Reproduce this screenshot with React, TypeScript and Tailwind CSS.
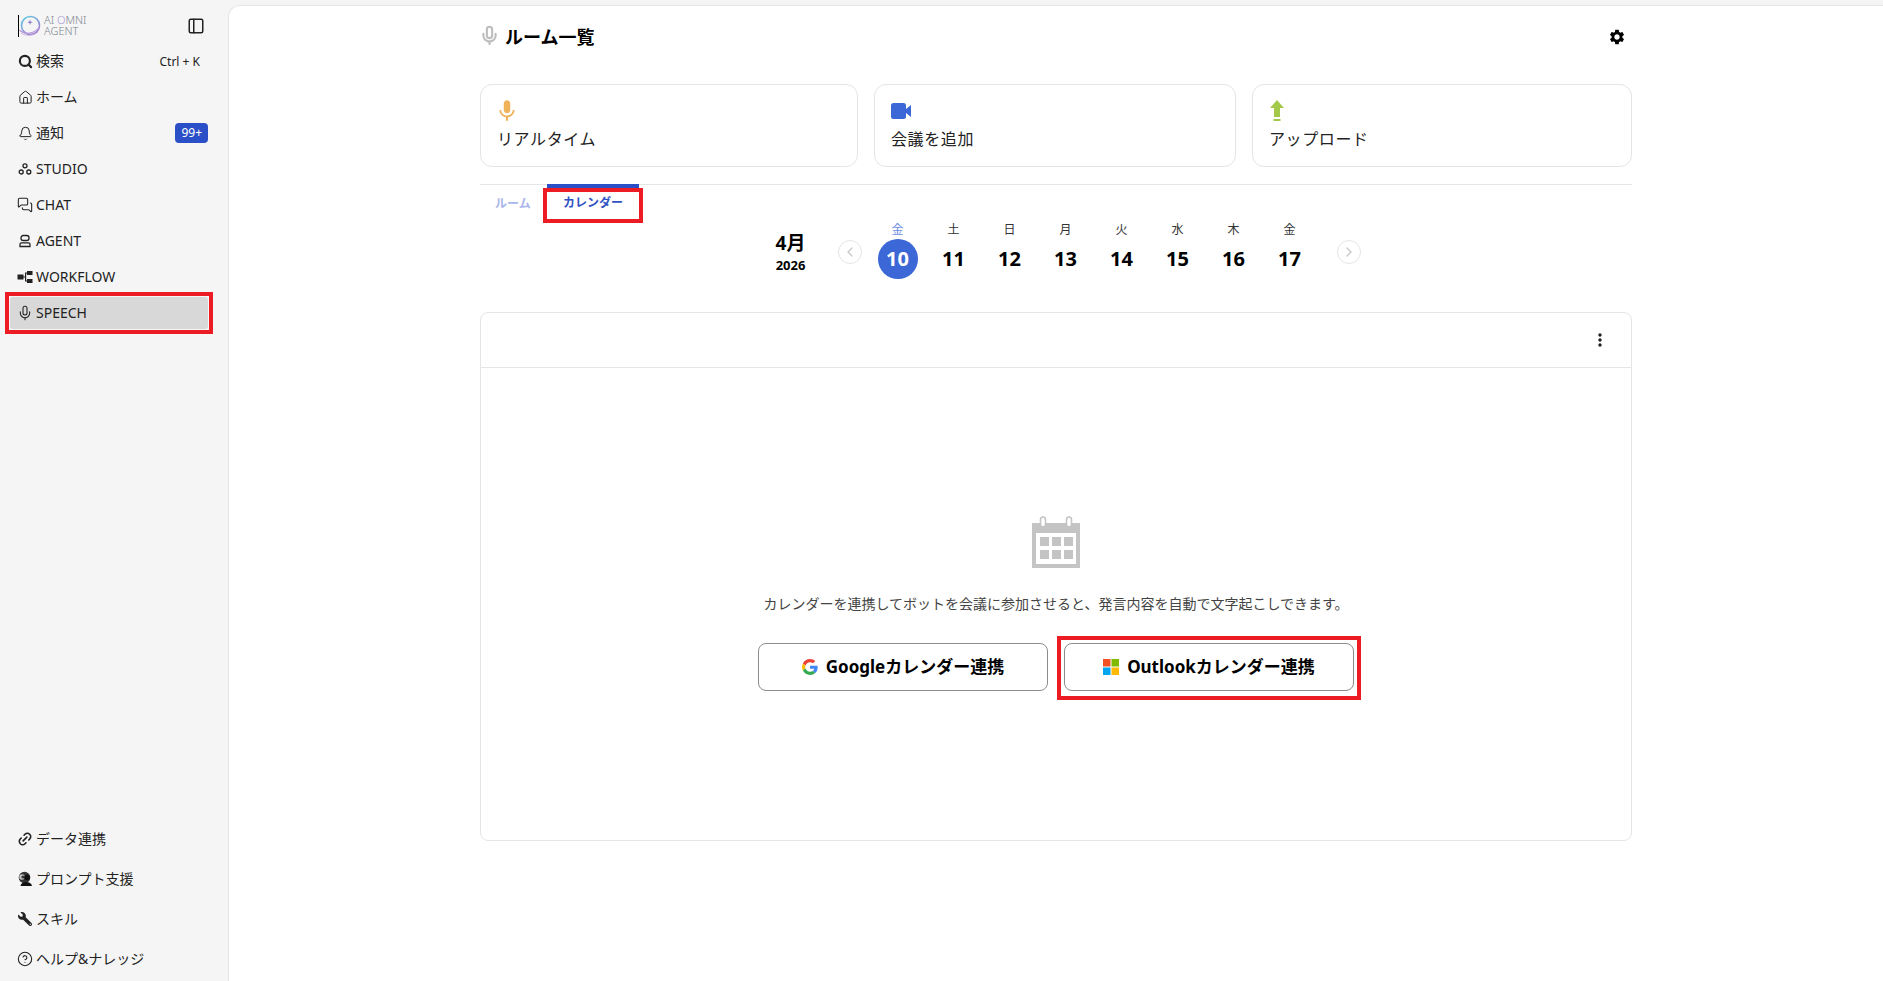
import { Bell, ChevronLeft, ChevronRight, CircleHelp, House, Link2, MessagesSquare, Mic, PanelLeft, Search } from 'lucide-react'
import { MdMic, MdMoreVert, MdSettings } from 'react-icons/md'
import { FaWrench } from 'react-icons/fa'
import type { ReactNode } from 'react'

const FONT = "font-['Noto_Sans','Noto_Sans_CJK_JP',sans-serif]"

function StudioIcon() {
  return (
    <svg viewBox="0 0 16 16" className="w-4 h-4" fill="none" stroke="#222" strokeWidth="1.3">
      <circle cx="8" cy="4.8" r="2" />
      <circle cx="4.2" cy="11" r="2" />
      <circle cx="11.8" cy="11" r="2" />
    </svg>
  )
}

function AgentIcon() {
  return (
    <svg viewBox="0 0 16 16" className="w-4 h-4" fill="none" stroke="#222" strokeWidth="1.3">
      <rect x="4" y="2.5" width="8" height="5" rx="2.2" />
      <path d="M3 13.5v-2.2a1.5 1.5 0 0 1 1.5-1.5h7a1.5 1.5 0 0 1 1.5 1.5v2.2z" />
    </svg>
  )
}

function WorkflowIcon() {
  return (
    <svg viewBox="0 0 16 16" className="w-4 h-4" fill="#222">
      <rect x="0.5" y="5.5" width="6" height="5" />
      <rect x="10" y="2" width="5.5" height="4" />
      <rect x="10" y="10" width="5.5" height="4" />
      <path d="M6 7.4h2V3.4h2.5v1.2H9.2v2.8h0v1.2h0v2.8h1.3v1.2H8V8.6H6z" />
    </svg>
  )
}

function PromptIcon() {
  return (
    <svg viewBox="0 0 16 16" className="w-4 h-4">
      <circle cx="7.5" cy="6.5" r="5.8" fill="#333" />
      <circle cx="5" cy="6" r="2.8" fill="#c4c4c4" />
      <circle cx="6" cy="6" r="1.6" fill="#333" />
      <circle cx="10" cy="6.5" r="2.8" fill="#111" />
      <path d="M3.5 15c.3-2.8 2.7-4 5.7-4s5.4 1.2 5.8 4z" fill="#111" />
    </svg>
  )
}

function Logo() {
  return (
    <div className="flex items-center h-[43px] pl-[18px] pt-[9px]">
      <div className="w-px h-[22px] bg-black" />
      <svg viewBox="0 0 24 24" className="w-[24px] h-[24px]" fill="none">
        <defs>
          <linearGradient id="logoRing" x1="0.2" y1="0" x2="0.8" y2="1">
            <stop offset="0" stopColor="#63c6dc" />
            <stop offset="1" stopColor="#a677cf" />
          </linearGradient>
        </defs>
        <circle cx="11.5" cy="11.5" r="9" stroke="url(#logoRing)" strokeWidth="1.6" />
        <path d="M0.5 16c5 5 14 4.5 20-3" stroke="#b79ad8" strokeWidth="1.2" />
        <path d="M2 19c5 3.5 12 3 17-1" stroke="#c9b3e3" strokeWidth="0.9" />
        <path d="M11 5.5l.7 2 2 .7-2 .7-.7 2-.7-2-2-.7 2-.7z" fill="#8b7fd0" />
      </svg>
      <div className="ml-px -mt-[3px] text-[11px] leading-[11px] text-[#7b8590] font-light">
        <div>
          AI <span className="text-[#a99ad6]">O</span>MNI
        </div>
        <div>AGENT</div>
      </div>
      <PanelLeft className="w-[18px] h-[18px] ml-[101px] mt-[-1px] text-[#222]" strokeWidth={2} />
    </div>
  )
}

function NavRow({ icon, label, right, active }: { icon: ReactNode; label: string; right?: ReactNode; active?: boolean }) {
  return (
    <div className="relative h-9 py-[2px]">
      <div className={`flex items-center h-full pl-[7px] gap-[3px] rounded-[3px] text-sm text-[#222] ${active ? 'bg-[#d8d8d8]' : ''}`}>
        <span className="w-4 flex justify-center">{icon}</span>
        <span>{label}</span>
        {right && <span className="ml-auto">{right}</span>}
      </div>
      {active && <span className="absolute -left-[5px] -right-[5px] top-[-3px] bottom-[-3px] border-4 border-[#ed1c24]" />}
    </div>
  )
}

function BottomRow({ icon, label }: { icon: ReactNode; label: string }) {
  return (
    <div className="flex items-center h-10 pl-[7px] gap-[3px] text-sm text-[#222]">
      <span className="w-4 flex justify-center">{icon}</span>
      <span>{label}</span>
    </div>
  )
}

function ActionCard({ icon, label, width }: { icon: ReactNode; label: string; width: string }) {
  return (
    <div className={`${width} h-[83px] border border-[#e5e5e5] rounded-xl px-4 pt-[13px]`}>
      <div className="h-[26px] flex items-center">{icon}</div>
      <div className="text-base tracking-[0.6px] leading-6 mt-[3px] text-[#222]">{label}</div>
    </div>
  )
}

const DAYS = [
  { w: '金', d: 10, active: true },
  { w: '土', d: 11 },
  { w: '日', d: 12 },
  { w: '月', d: 13 },
  { w: '火', d: 14 },
  { w: '水', d: 15 },
  { w: '木', d: 16 },
  { w: '金', d: 17 },
]

function GoogleLogo() {
  return (
    <svg viewBox="0 0 48 48" className="w-4 h-4">
      <path fill="#EA4335" d="M24 9.5c3.5 0 6.7 1.2 9.1 3.6l6.8-6.8C35.8 2.4 30.3 0 24 0 14.6 0 6.5 5.4 2.6 13.2l7.9 6.2C12.4 13.6 17.7 9.5 24 9.5z" />
      <path fill="#4285F4" d="M46.9 24.5c0-1.6-.1-3.1-.4-4.5H24v9h12.9c-.6 3-2.2 5.5-4.7 7.2l7.7 6c4.5-4.2 7-10.3 7-17.7z" />
      <path fill="#FBBC05" d="M10.5 28.6c-.5-1.4-.8-3-.8-4.6s.3-3.2.8-4.6l-7.9-6.2C.9 16.5 0 20.1 0 24s.9 7.5 2.6 10.8z" />
      <path fill="#34A853" d="M24 48c6.5 0 11.9-2.1 15.9-5.8l-7.7-6c-2.2 1.4-4.9 2.3-8.2 2.3-6.3 0-11.6-4.2-13.5-9.9l-7.9 6.2C6.5 42.6 14.6 48 24 48z" />
    </svg>
  )
}

function MicrosoftLogo() {
  return (
    <svg viewBox="0 0 16 16" className="w-4 h-4">
      <rect x="0" y="0" width="7.5" height="7.5" fill="#f25022" />
      <rect x="8.5" y="0" width="7.5" height="7.5" fill="#7fba00" />
      <rect x="0" y="8.5" width="7.5" height="7.5" fill="#00a4ef" />
      <rect x="8.5" y="8.5" width="7.5" height="7.5" fill="#ffb900" />
    </svg>
  )
}

function CalendarIcon() {
  return (
    <svg viewBox="0 0 48 52" className="w-[48px] h-[52px]">
      <path d="M0 7h48v45H0z" fill="#c4c4c4" />
      <rect x="4" y="17" width="40" height="31" fill="#fff" />
      <rect x="8" y="21" width="9" height="9" fill="#c4c4c4" />
      <rect x="20" y="21" width="9" height="9" fill="#c4c4c4" />
      <rect x="32" y="21" width="9" height="9" fill="#c4c4c4" />
      <rect x="8" y="34" width="9" height="9" fill="#c4c4c4" />
      <rect x="20" y="34" width="9" height="9" fill="#c4c4c4" />
      <rect x="32" y="34" width="9" height="9" fill="#c4c4c4" />
      <rect x="8.5" y="1" width="5" height="10" rx="2.5" fill="#fff" stroke="#c4c4c4" strokeWidth="1.5" />
      <rect x="34.5" y="1" width="5" height="10" rx="2.5" fill="#fff" stroke="#c4c4c4" strokeWidth="1.5" />
    </svg>
  )
}

export default function App() {
  return (
    <div className={`flex h-[981px] w-[1883px] overflow-hidden bg-[#f5f5f5] ${FONT}`}>
      <aside className="w-[228px] shrink-0 flex flex-col justify-between">
        <div>
          <Logo />
          <div className="pl-[10px] pr-5">
            <NavRow
              icon={<Search className="w-[15px] h-[15px]" strokeWidth={3.4} />}
              label="検索"
              right={<span className="text-xs mr-2">Ctrl + K</span>}
            />
            <NavRow icon={<House className="w-[15px] h-[15px]" strokeWidth={1.6} />} label="ホーム" />
            <NavRow
              icon={<Bell className="w-[15px] h-[15px]" strokeWidth={1.6} />}
              label="通知"
              right={<span className="block bg-[#2b4fc7] text-white text-xs leading-5 px-[6px] rounded-[4px]">99+</span>}
            />
            <NavRow icon={<StudioIcon />} label="STUDIO" />
            <NavRow icon={<MessagesSquare className="w-4 h-4" strokeWidth={1.6} />} label="CHAT" />
            <NavRow icon={<AgentIcon />} label="AGENT" />
            <NavRow icon={<WorkflowIcon />} label="WORKFLOW" />
            <NavRow icon={<Mic className="w-4 h-4" strokeWidth={1.6} />} label="SPEECH" active />
          </div>
        </div>
        <div className="pl-[10px] pr-5 pb-[2px]">
          <BottomRow icon={<Link2 className="w-4 h-4 -rotate-45" strokeWidth={2.4} />} label="データ連携" />
          <BottomRow icon={<PromptIcon />} label="プロンプト支援" />
          <BottomRow icon={<FaWrench className="w-[14px] h-[14px] -scale-x-100" />} label="スキル" />
          <BottomRow icon={<CircleHelp className="w-4 h-4" strokeWidth={1.6} />} label="ヘルプ&ナレッジ" />
        </div>
      </aside>

      <main className="flex-1 mt-[5px] bg-white border-l border-t border-[#e5e5e5] rounded-tl-xl">
        <div className="w-[1152px] mx-auto">
          <div className="flex items-center justify-between h-[62px]">
            <div className="flex items-center gap-[5px] -ml-px">
              <Mic className="w-[21px] h-[21px] -mt-[3px] text-[#bdbdbd]" strokeWidth={2.4} />
              <span className="text-lg font-bold text-black">ルーム一覧</span>
            </div>
            <MdSettings className="w-[18px] h-[18px] mr-[6px] text-black" />
          </div>

          <div className="flex gap-4 mt-[16px]">
            <ActionCard
              width="w-[378px]"
              icon={<MdMic className="w-[26px] h-[26px] -ml-[3px] text-[#f0b35c]" />}
              label="リアルタイム"
            />
            <ActionCard
              width="w-[362px]"
              icon={
                <svg viewBox="0 0 20 16" className="w-5 h-4">
                  <rect x="0" y="0" width="15" height="16" rx="2.5" fill="#3b68d6" />
                  <path d="M15 6l5-4v12l-5-4z" fill="#3b68d6" />
                </svg>
              }
              label="会議を追加"
            />
            <ActionCard
              width="flex-1"
              icon={
                <svg viewBox="0 0 16 24" className="w-4 h-6">
                  <path d="M8 1l7 8h-4v9H5V9H1z" fill="#a4c94a" />
                  <rect x="4.5" y="20" width="7" height="2" fill="#a4c94a" />
                </svg>
              }
              label="アップロード"
            />
          </div>

          <div className="mt-[17px] border-t border-[#e5e5e5] h-[38px] flex">
            <div className="pl-[15px] w-[67px] pt-[9px] text-xs font-semibold leading-5 text-[#a9b6ea]">ルーム</div>
            <div className="relative w-[92px] text-center">
              <div className="h-1 -mt-px bg-[#2b4fc7]" />
              <div className="pt-[5px] text-xs font-bold leading-5 text-[#2f52c4]">カレンダー</div>
              <span className="absolute -left-1 -right-1 top-[3px] h-[35px] border-4 border-[#ed1c24]" />
            </div>
          </div>

          <div className="flex items-start justify-center h-[58px]">
            <div className="w-[78px] pt-[9px] text-center text-black font-bold">
              <div className="text-[19px] leading-6">4月</div>
              <div className="text-[13px] leading-5">2026</div>
            </div>
            <div className="ml-2 mt-[18px] w-6 h-6 rounded-full border border-[#e5e5e5] flex items-center justify-center">
              <ChevronLeft className="w-4 h-4 text-[#c8c8c8]" />
            </div>
            <div className="flex ml-[8px]">
              {DAYS.map((x) => (
                <div key={x.d} className="w-14 pt-px flex flex-col items-center">
                  <div className={`text-xs leading-[14px] ${x.active ? 'text-[#6d8ce0]' : 'text-[#333]'}`}>{x.w}</div>
                  <div
                    className={`w-10 h-10 mt-[2px] rounded-full flex items-center justify-center text-xl font-bold pb-px ${x.active ? 'bg-[#3b68d6] text-white' : 'text-black'}`}
                  >
                    {x.d}
                  </div>
                </div>
              ))}
            </div>
            <div className="ml-[19px] mt-[18px] w-6 h-6 rounded-full border border-[#e5e5e5] flex items-center justify-center">
              <ChevronRight className="w-4 h-4 text-[#c8c8c8]" />
            </div>
          </div>

          <div className="mt-[32px] h-[529px] border border-[#e5e5e5] rounded-lg flex flex-col">
            <div className="h-[55px] border-b border-[#e5e5e5] flex items-center justify-end pr-[21px]">
              <MdMoreVert className="w-5 h-5 -mt-px text-[#222]" />
            </div>
            <div className="flex-1 flex flex-col items-center pt-[148px]">
              <CalendarIcon />
              <p className="mt-[26px] text-sm leading-5 text-[#444]">
                カレンダーを連携してボットを会議に参加させると、発言内容を自動で文字起こしできます。
              </p>
              <div className="flex gap-4 mt-[29px]">
                <button className="w-[290px] h-12 border border-[#8c8c8c] rounded-lg flex items-center justify-center gap-2 text-[17px] font-bold text-black">
                  <GoogleLogo />
                  Googleカレンダー連携
                </button>
                <div className="relative">
                  <button className="w-[290px] h-12 border border-[#8c8c8c] rounded-lg flex items-center justify-center gap-2 text-[17px] font-bold text-black">
                    <MicrosoftLogo />
                    Outlookカレンダー連携
                  </button>
                  <span className="absolute -left-[7px] -right-[7px] -top-[7px] -bottom-[9px] border-4 border-[#ed1c24]" />
                </div>
              </div>
            </div>
          </div>
        </div>
      </main>
    </div>
  )
}
